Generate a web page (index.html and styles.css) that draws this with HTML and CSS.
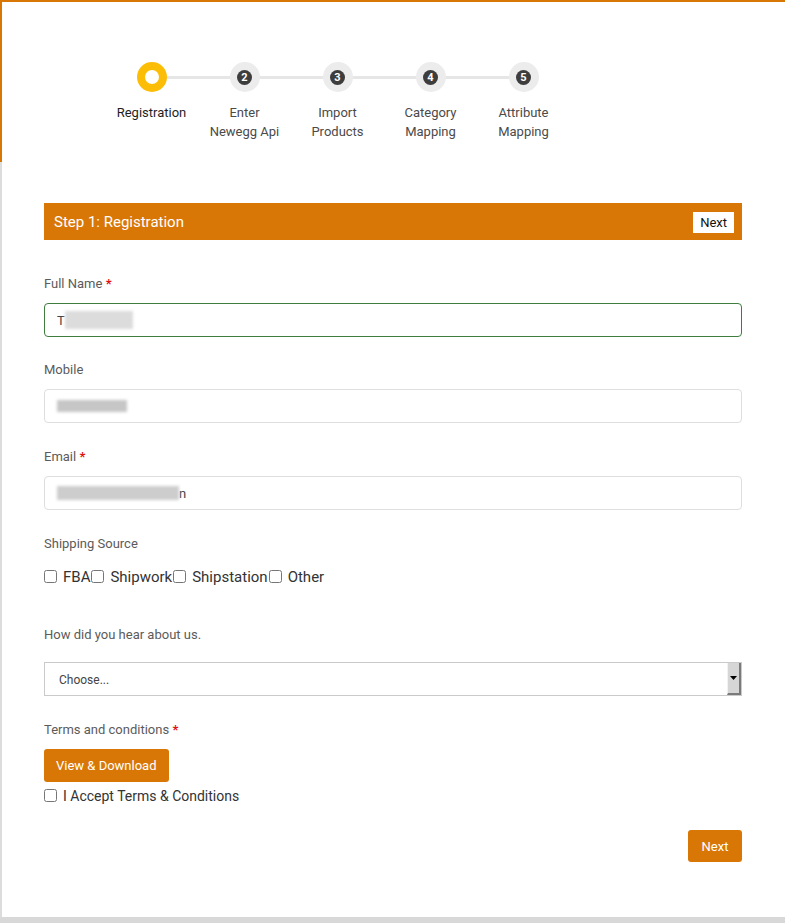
FILE: index.html
```html
<!DOCTYPE html>
<html lang="en">
<head>
  <meta charset="UTF-8" />
  <meta name="viewport" content="width=device-width, initial-scale=1" />
  <title>Newegg Onboarding - Registration</title>
  <link rel="stylesheet" href="styles.css">
</head>
<body>
  <div class="frame">
    <ol class="steps">
      <li class="step active"><span class="dot"><span class="ring"></span></span><span class="step-label">Registration</span></li>
      <li class="step"><span class="dot"><span class="num">2</span></span><span class="step-label">Enter<br>Newegg Api</span></li>
      <li class="step"><span class="dot"><span class="num">3</span></span><span class="step-label">Import<br>Products</span></li>
      <li class="step"><span class="dot"><span class="num">4</span></span><span class="step-label">Category<br>Mapping</span></li>
      <li class="step"><span class="dot"><span class="num">5</span></span><span class="step-label">Attribute<br>Mapping</span></li>
    </ol>

    <form class="form">
      <div class="bar">
        <span class="bar-title">Step 1: Registration</span>
        <button type="button" class="bar-next">Next</button>
      </div>

      <div class="group first">
        <label class="label">Full Name <span class="req">*</span></label>
        <div class="input focus">T<span class="redact name"></span></div>
      </div>

      <div class="group tight">
        <label class="label">Mobile</label>
        <div class="input"><span class="redact mobile"></span></div>
      </div>

      <div class="group">
        <label class="label">Email <span class="req">*</span></label>
        <div class="input"><span class="redact email"></span>n</div>
      </div>

      <div class="group">
        <label class="label">Shipping Source</label>
        <div class="checks">
          <label class="check"><input type="checkbox"> FBA</label>
          <label class="check"><input type="checkbox"> Shipwork</label>
          <label class="check"><input type="checkbox"> Shipstation</label>
          <label class="check"><input type="checkbox"> Other</label>
        </div>
      </div>

      <div class="group wide">
        <label class="label">How did you hear about us.</label>
        <div class="select">
          <select>
            <option>Choose...</option>
          </select>
          <span class="select-btn"><svg width="7" height="4" viewBox="0 0 7 4"><path d="M0 0h7L3.5 4z" fill="#000"/></svg></span>
        </div>
      </div>

      <div class="group">
        <label class="label">Terms and conditions <span class="req">*</span></label>
        <button type="button" class="btn">View &amp; Download</button>
        <label class="check accept"><input type="checkbox"> I Accept Terms &amp; Conditions</label>
      </div>

      <div class="actions">
        <button type="button" class="btn next">Next</button>
      </div>
    </form>
  </div>
</body>
</html>
```

FILE: styles.css
```css
:root {
  --orange: #d97706;
  --yellow: #fcbd06;
  --label: #5b5b5b;
  --text: #333;
}

* {
  box-sizing: border-box;
}

body {
  margin: 0;
  background: #d8d8d8;
  font-family: Roboto, "Liberation Sans", Arial, sans-serif;
  color: var(--text);
}

.frame {
  height: 917px;
  border-top: 2px solid var(--orange);
  padding: 0 43px 0 44px;
  background:
    linear-gradient(var(--orange), var(--orange)) left top / 2px 160px no-repeat,
    linear-gradient(#dcdcdc, #dcdcdc) left top / 2px 100% no-repeat,
    #fff;
}

/* stepper */
.steps {
  list-style: none;
  margin: 0;
  padding: 60px 0 0 61px;
  display: flex;
  background: linear-gradient(#e6e6e6, #e6e6e6) no-repeat 107px 74px / 372px 3px;
}

.step {
  width: 93px;
  display: flex;
  flex-direction: column;
  align-items: center;
}

.dot {
  width: 30px;
  height: 30px;
  border-radius: 50%;
  background: #ececec;
  display: flex;
  align-items: center;
  justify-content: center;
}

.num {
  width: 15px;
  height: 15px;
  border-radius: 50%;
  background: #3d3d3d;
  color: #fff;
  font-size: 11px;
  font-weight: 700;
  line-height: 15px;
  text-align: center;
}

.step.active .dot {
  background: var(--yellow);
}

.ring {
  width: 14px;
  height: 14px;
  border-radius: 50%;
  background: #fff;
}

.step-label {
  margin-top: 11px;
  font-size: 13px;
  line-height: 19px;
  color: #4a4a4a;
  text-align: center;
  white-space: nowrap;
}

.step.active .step-label {
  color: #1e1e1e;
}

/* form */
.form {
  margin-top: 62px;
}

.bar {
  height: 37px;
  background: var(--orange);
  display: flex;
  align-items: center;
  justify-content: space-between;
  padding: 1px 8px 0 10px;
}

.bar-title {
  color: #fff;
  font-size: 15px;
}

.bar-next {
  border: 0;
  background: #fff;
  color: #111;
  font-family: inherit;
  font-size: 13px;
  font-weight: 400;
  height: 21px;
  padding: 0 7px;
  cursor: pointer;
}

.group {
  margin-top: 24px;
  display: flex;
  flex-direction: column;
  align-items: flex-start;
}

.group.first {
  margin-top: 34px;
}

.group.tight {
  margin-top: 23px;
}

.group.wide {
  margin-top: 38px;
}

.label {
  font-size: 13px;
  line-height: 20px;
  color: var(--label);
  margin-bottom: 9px;
}

.req {
  color: #e01010;
  font-weight: 700;
}

.input {
  width: 100%;
  height: 34px;
  border: 1px solid #dedede;
  border-radius: 4px;
  padding: 0 12px;
  display: flex;
  align-items: center;
  font-size: 13px;
  color: #444;
}

.input.focus {
  border-color: #3f7d3f;
}

.redact {
  display: inline-block;
  filter: blur(1.5px);
}

.redact.name {
  width: 68px;
  height: 18px;
  background: #dcdcdc;
}

.redact.mobile {
  width: 70px;
  height: 12px;
  background: #c6c6c6;
}

.redact.email {
  width: 122px;
  height: 14px;
  background: #cdcdcd;
}

.checks {
  display: flex;
  margin-top: 4px;
}

.check {
  display: flex;
  align-items: center;
  font-size: 14px;
  line-height: 20px;
  color: var(--text);
  margin-right: 3px;
  cursor: pointer;
}

.checks .check {
  font-size: 15px;
  margin-right: 1px;
}

.check input {
  width: 13px;
  height: 13px;
  margin: 0 6px 2px 0;
}

.select {
  width: 100%;
  height: 34px;
  border: 1px solid #cacaca;
  display: flex;
  background: #fff;
  margin-top: 8px;
}

.select select {
  flex: 1;
  appearance: none;
  border: 0;
  background: transparent;
  font-family: inherit;
  font-size: 12px;
  color: #444;
  padding: 1px 0 0 14px;
  outline: none;
}

.select-btn {
  width: 14px;
  background: #d6d6d6;
  border-left: 1px solid #f2f2f2;
  border-right: 2px solid #7a7a7a;
  border-bottom: 2px solid #7a7a7a;
  display: flex;
  align-items: center;
  justify-content: center;
}

.btn {
  border: 0;
  border-radius: 3px;
  background: var(--orange);
  color: #fff;
  font-family: inherit;
  font-size: 13px;
  height: 33px;
  padding: 0 12px;
  cursor: pointer;
}

.accept {
  margin-top: 4px;
}

.actions {
  display: flex;
  justify-content: flex-end;
  margin-top: 24px;
}

.actions .btn.next {
  height: 32px;
  width: 54px;
  padding: 0;
}
```
